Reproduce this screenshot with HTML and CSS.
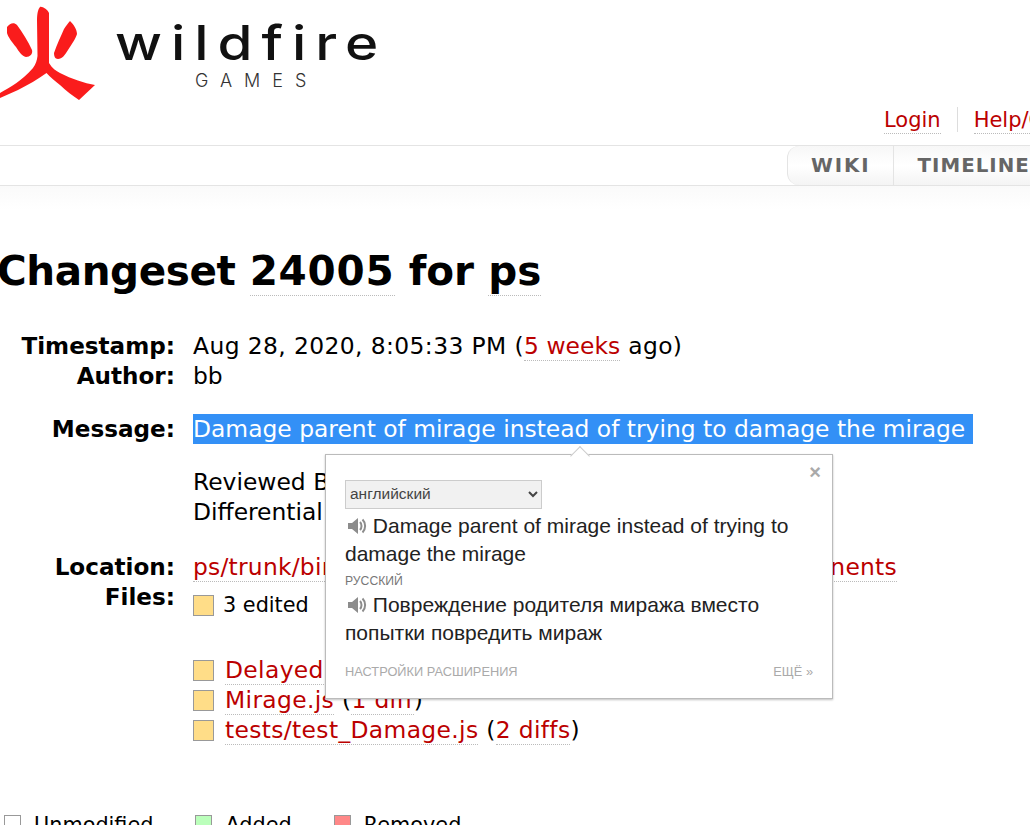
FILE: index.html
```html
<!DOCTYPE html>
<html lang="en">
<head>
<meta charset="utf-8">
<title>Changeset 24005 for ps</title>
<link rel="stylesheet" href="styles.css">
</head>
<body>
<div class="page">
  <header class="banner">
    <div class="logo">
      <svg class="logo-mark" viewBox="0 0 96 101" width="96" height="101" aria-hidden="true">
        <path fill="#fa1c1c" d="M40 7C42 6 48 10 49 13L49 63C52 68 56 71 60 73C72 79 84 83 95 85L79 100C73 96 66 91 60 85C55 81 50 77 46.500 73C38 79 28 85 18 90L0 98L0 93C10 87 22 81 33 68C36 64 37 60 37.500 56L37 20C37 14 38 9 40 7Z"/>
        <path fill="#fa1c1c" d="M7 27C10 23 14 22 17 25C22 32 28 41 32 50C33 54 30 57 26 57C22 56 19 52 16 47C12 42 8 37 7 33Z"/>
        <path fill="#fa1c1c" d="M70 21C73 24 77 29 77 34C76 38 72 44 68 50C65 55 62 59 58 59C55 59 54 56 54 53C57 44 61 36 64 29C66 26 68 23 70 21Z"/>
      </svg>
      <div class="logo-text">
        <span class="logo-name">wildfire</span>
        <span class="logo-sub">GAMES</span>
      </div>
    </div>
    <nav class="metanav">
      <a href="#">Login</a>
      <a href="#" class="metanav-last">Help/Guide</a>
    </nav>
  </header>
  <nav class="mainnav">
    <ul class="tabs">
      <li class="tab tab-wiki">WIKI</li>
      <li class="tab tab-timeline">TIMELINE</li>
    </ul>
  </nav>
  <main class="content">
    <h1 class="title"><span class="title-word">Changeset</span> <a href="#" class="title-num">24005</a> for <a href="#">ps</a></h1>
    <dl class="props">
      <dt>Timestamp:</dt>
      <dd class="wide">Aug 28, 2020, 8:05:33 PM (<a href="#">5 weeks</a> ago)</dd>
      <dt>Author:</dt>
      <dd>bb</dd>
      <dt class="gap">Message:</dt>
      <dd class="gap message">
        <p class="msg-line"><span class="selected">Damage parent of mirage instead of trying to damage the mirage&nbsp;</span></p>
        <p class="msg-para">Reviewed By: Freagarach<br>Differential Revision: D3003</p>
      </dd>
      <dt class="gap-loc">Location:</dt>
      <dd class="gap-loc"><a href="#" class="path">ps/trunk/binaries/data/mods/public/simulation/components</a></dd>
      <dt>Files:</dt>
      <dd>
        <div class="edited"><span class="sw sw-edit"></span><span class="edited-text">3 edited</span></div>
        <ul class="files">
          <li><span class="sw sw-edit"></span><a href="#">DelayedDamage.js</a> (<a href="#">1 diff</a>)</li>
          <li><span class="sw sw-edit"></span><a href="#">Mirage.js</a> (<a href="#">1 diff</a>)</li>
          <li><span class="sw sw-edit"></span><a href="#">tests/test_Damage.js</a> (<a href="#">2 diffs</a>)</li>
        </ul>
      </dd>
    </dl>
    <div class="legend">
      <span class="legend-item"><span class="lg lg-none"></span>Unmodified</span>
      <span class="legend-item"><span class="lg lg-add"></span>Added</span>
      <span class="legend-item"><span class="lg lg-rem"></span>Removed</span>
    </div>
  </main>
</div>

<aside class="bubble">
  <span class="bubble-arrow"></span>
  <span class="bubble-close">×</span>
  <select class="bubble-select"><option>английский</option></select>
  <p class="bubble-text">
    <svg class="speaker" viewBox="0 0 20 18" width="20" height="18" aria-hidden="true"><path fill="#8c8c8c" d="M1 6h4l6-5v16l-6-5H1z"/><path fill="none" stroke="#8c8c8c" stroke-width="2" d="M13 5c2 2 2 6 0 8M15.500 2.500c3.500 3.500 3.500 9.500 0 13"/></svg>
    Damage parent of mirage instead of trying to damage the mirage
  </p>
  <div class="bubble-lang">РУССКИЙ</div>
  <p class="bubble-text bubble-target">
    <svg class="speaker" viewBox="0 0 20 18" width="20" height="18" aria-hidden="true"><path fill="#8c8c8c" d="M1 6h4l6-5v16l-6-5H1z"/><path fill="none" stroke="#8c8c8c" stroke-width="2" d="M13 5c2 2 2 6 0 8M15.500 2.500c3.500 3.500 3.500 9.500 0 13"/></svg>
    Повреждение родителя миража вместо попытки повредить мираж
  </p>
  <div class="bubble-foot"><span>НАСТРОЙКИ РАСШИРЕНИЯ</span><span>ЕЩЁ »</span></div>
</aside>
</body>
</html>
```
FILE: styles.css
```css
html, body {
  margin: 0;
  padding: 0;
  height: 825px;
  overflow: hidden;
  background: #fff;
}
body {
  font-family: "DejaVu Sans", Verdana, sans-serif;
  font-size: 23.400px;
  line-height: 30px;
  color: #000;
}
a {
  color: #b00;
  text-decoration: none;
  border-bottom: 1px dotted #bbb;
}
.page {
  width: 1300px;
}
.banner {
  height: 145px;
  position: relative;
  display: flex;
  flex-direction: column;
  justify-content: space-between;
}
.logo {
  display: flex;
  align-items: flex-start;
  height: 101px;
}
.logo-mark {
  flex: none;
}
.logo-text {
  display: flex;
  flex-direction: column;
  align-items: flex-start;
  margin-left: 19px;
  padding-top: 15px;
  color: #111;
  font-family: "Inter", sans-serif;
}
.logo-name {
  font-size: 48px;
  line-height: 56px;
  letter-spacing: 7.600px;
  font-weight: 500;
  transform: scaleX(1.18);
  transform-origin: left center;
}
.logo-sub {
  font-size: 18px;
  line-height: 20px;
  letter-spacing: 12px;
  font-weight: 300;
  color: #333;
  margin-left: 80px;
}
.metanav {
  display: flex;
  padding-left: 884px;
  padding-bottom: 11px;
  line-height: 26px;
}
.metanav a {
  font-size: 21px;
}
.metanav-last {
  margin-left: 33px;
  position: relative;
}
.metanav-last::before {
  content: "";
  position: absolute;
  left: -17px;
  top: 0;
  height: 25px;
  border-left: 1px solid #ddd;
}
.mainnav {
  height: 39px;
  border-top: 1px solid #e4e4e4;
  border-bottom: 1px solid #e4e4e4;
  padding-left: 787px;
}
.tabs {
  margin: 0;
  padding: 0;
  list-style: none;
  display: flex;
  height: 39px;
  border-left: 1px solid #e4e4e4;
  border-radius: 12px 0 0 12px;
  background: linear-gradient(#f7f7f7, #fff 50%, #f4f4f4);
}
.tab {
  font-weight: bold;
  font-size: 19.800px;
  line-height: 40px;
  color: #666;
  padding: 0 23px;
  border-right: 1px solid #e4e4e4;
}
.tab-wiki {
  letter-spacing: 1.900px;
}
.tab-timeline {
  letter-spacing: 1.040px;
}
.content {
  background: linear-gradient(#fafafa, #fff 24px);
}
.title {
  margin: 0 0 0 -3px;
  padding: 58px 0 0 0;
  font-size: 40.500px;
  line-height: 54px;
  font-weight: bold;
}
.title a {
  color: #000;
}
.title-word {
  letter-spacing: -.400px;
}
.title-num {
  letter-spacing: .800px;
}
.props {
  margin: 33px 0 0;
  display: grid;
  grid-template-columns: 175px 1fr;
  column-gap: 18px;
}
.props dt {
  font-weight: bold;
  font-size: 23.100px;
  text-align: right;
}
.props dd {
  margin: 0;
}
.wide {
  letter-spacing: .400px;
}
.wide a {
  letter-spacing: .050px;
}
.gap {
  margin-top: 23px !important;
}
.gap-loc {
  margin-top: 25px !important;
}
.path {
  letter-spacing: .230px;
}
.message p {
  margin: 0;
}
.msg-para {
  margin-top: 23px !important;
}
.selected {
  background: #3390f6;
  color: #fff;
  display: inline-block;
}
.edited {
  display: flex;
  align-items: center;
  height: 30px;
  margin-top: 8px;
  margin-bottom: 35px;
}
.edited-text {
  font-size: 20.800px;
}
.sw {
  display: inline-block;
  box-sizing: border-box;
  width: 21px;
  height: 21px;
  border: 1px solid #999;
  margin-right: 9px;
  vertical-align: -3px;
}
.sw-edit {
  background: #fd8;
}
.files {
  margin: 0;
  padding: 0;
  list-style: none;
}
.files li {
  white-space: nowrap;
  letter-spacing: .350px;
}
.files .sw {
  margin-right: 11px;
}
.legend {
  display: flex;
  gap: 42px;
  margin: 65px 0 0 4px;
  font-size: 20.800px;
}
.legend-item {
  display: flex;
  align-items: baseline;
}
.lg {
  display: inline-block;
  box-sizing: border-box;
  width: 17px;
  height: 17px;
  border: 1px solid #999;
  margin-right: 13px;
}
.lg-none {
  background: #fff;
}
.lg-add {
  background: #bfb;
}
.lg-rem {
  background: #f88;
}
.bubble {
  position: absolute;
  left: 325px;
  top: 454px;
  box-sizing: border-box;
  width: 508px;
  height: 245px;
  padding: 25px 19px 0;
  background: #fff;
  border: 1px solid #bbb;
  box-shadow: 0 1px 2px rgba(0, 0, 0, .25);
  font-family: "Liberation Sans", Arial, sans-serif;
  color: #222;
}
.bubble-arrow {
  position: absolute;
  left: 247px;
  top: -6px;
  width: 13px;
  height: 13px;
  background: #fff;
  border-left: 1px solid #ccc;
  border-top: 1px solid #ccc;
  transform: rotate(45deg);
}
.bubble-close {
  position: absolute;
  right: 11px;
  top: 7px;
  font-size: 20px;
  font-weight: bold;
  line-height: 20px;
  color: #aaa;
}
.bubble-select {
  display: block;
  box-sizing: border-box;
  width: 197px;
  height: 29px;
  padding: 0 0 2px;
  background: #f1f1f1;
  border: 1px solid #ccc;
  border-radius: 0;
  font-family: "Liberation Sans", Arial, sans-serif;
  font-size: 15.500px;
  color: #444;
}
.bubble-text {
  margin: 3px 0 0;
  font-size: 21px;
  line-height: 28px;
}
.bubble-target {
  margin-top: 2px;
  line-height: 27.600px;
}
.speaker {
  vertical-align: -2px;
  margin-left: 2px;
}
.bubble-lang {
  font-size: 12.200px;
  line-height: 16px;
  color: #777;
  margin-top: 5px;
}
.bubble-foot {
  display: flex;
  justify-content: space-between;
  margin-top: 18px;
  font-size: 12.800px;
  line-height: 16px;
  color: #aaa;
}
```
